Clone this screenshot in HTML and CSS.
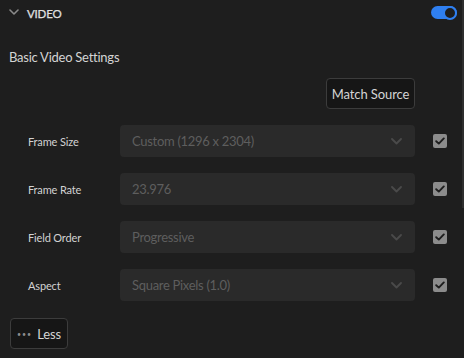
FILE: index.html
```html
<!DOCTYPE html>
<html>
<head>
<meta charset="utf-8">
<link rel="stylesheet" href="styles.css">
</head>
<body>
<div class="panel">
  <div class="header">
    <svg class="chev" width="10" height="6" viewBox="0 0 10 6"><path d="M1 1 L5 5 L9 1" fill="none" stroke="#8a8a8a" stroke-width="1.6" stroke-linecap="round" stroke-linejoin="round"/></svg>
    <span class="title">VIDEO</span>
    <span class="spacer"></span>
    <span class="toggle"><span class="knob"></span></span>
  </div>
  <div class="section-title">Basic Video Settings</div>
  <div class="match-row"><button class="btn match">Match Source</button></div>
  <div class="rows">
    <div class="row">
      <span class="label">Frame Size</span>
      <div class="select"><span>Custom (1296 x 2304)</span><svg class="dd" width="11" height="7" viewBox="0 0 11 7"><path d="M1 1 L5.5 5.5 L10 1" fill="none" stroke="#4a4a4a" stroke-width="1.8" stroke-linecap="round" stroke-linejoin="round"/></svg></div>
      <span class="check"><svg width="10" height="8" viewBox="0 0 10 8"><path d="M1.2 4.2 L3.8 6.6 L8.8 1.4" fill="none" stroke="#1e1e1e" stroke-width="1.9" stroke-linecap="round" stroke-linejoin="round"/></svg></span>
    </div>
    <div class="row">
      <span class="label">Frame Rate</span>
      <div class="select"><span>23.976</span><svg class="dd" width="11" height="7" viewBox="0 0 11 7"><path d="M1 1 L5.5 5.5 L10 1" fill="none" stroke="#4a4a4a" stroke-width="1.8" stroke-linecap="round" stroke-linejoin="round"/></svg></div>
      <span class="check"><svg width="10" height="8" viewBox="0 0 10 8"><path d="M1.2 4.2 L3.8 6.6 L8.8 1.4" fill="none" stroke="#1e1e1e" stroke-width="1.9" stroke-linecap="round" stroke-linejoin="round"/></svg></span>
    </div>
    <div class="row">
      <span class="label">Field Order</span>
      <div class="select"><span>Progressive</span><svg class="dd" width="11" height="7" viewBox="0 0 11 7"><path d="M1 1 L5.5 5.5 L10 1" fill="none" stroke="#4a4a4a" stroke-width="1.8" stroke-linecap="round" stroke-linejoin="round"/></svg></div>
      <span class="check"><svg width="10" height="8" viewBox="0 0 10 8"><path d="M1.2 4.2 L3.8 6.6 L8.8 1.4" fill="none" stroke="#1e1e1e" stroke-width="1.9" stroke-linecap="round" stroke-linejoin="round"/></svg></span>
    </div>
    <div class="row">
      <span class="label">Aspect</span>
      <div class="select"><span>Square Pixels (1.0)</span><svg class="dd" width="11" height="7" viewBox="0 0 11 7"><path d="M1 1 L5.5 5.5 L10 1" fill="none" stroke="#4a4a4a" stroke-width="1.8" stroke-linecap="round" stroke-linejoin="round"/></svg></div>
      <span class="check"><svg width="10" height="8" viewBox="0 0 10 8"><path d="M1.2 4.2 L3.8 6.6 L8.8 1.4" fill="none" stroke="#1e1e1e" stroke-width="1.9" stroke-linecap="round" stroke-linejoin="round"/></svg></span>
    </div>
  </div>
  <div class="less-row"><button class="btn less"><span class="dots">&bull;&bull;&bull;</span>Less</button></div>
  <div class="scrollthumb"></div>
</div>
</body>
</html>
```

FILE: styles.css
```css
html, body {
  margin: 0;
  padding: 0;
  background: #1e1e1e;
}
body {
  width: 464px;
  height: 358px;
  overflow: hidden;
  font-family: Lato, "Open Sans", sans-serif;
  color: #d4d4d4;
}
.panel {
  position: relative;
  height: 358px;
}
.header {
  display: flex;
  align-items: center;
  height: 26px;
  padding: 0 7px 0 9px;
}
.chev {
  margin-top: -2px;
}
.title {
  margin-left: 8px;
  font-size: 11.5px;
  font-weight: 400;
  color: #e0e0e0;
  letter-spacing: -0.2px;
  -webkit-text-stroke: 0.25px #e0e0e0;
}
.spacer { flex: 1; }
.toggle {
  position: relative;
  width: 26px;
  height: 13px;
  border-radius: 7px;
  background: #2f7ff0;
  margin-top: -1px;
}
.knob {
  position: absolute;
  right: 0;
  top: -0.5px;
  width: 10px;
  height: 10px;
  border-radius: 50%;
  border: 2px solid #2f7ff0;
  background: #1e1e1e;
}
.section-title {
  margin-top: 21px;
  padding-left: 9px;
  font-size: 13px;
  letter-spacing: -0.25px;
  line-height: 20px;
  color: #d4d4d4;
}
.match-row {
  display: flex;
  justify-content: flex-end;
  padding-right: 49px;
  margin-top: 11px;
}
.btn {
  font-family: Lato, "Open Sans", sans-serif;
  background: #161616;
  border: 1px solid #3c3c3c;
  border-radius: 4px;
  color: #d4d4d4;
  font-size: 13px;
  letter-spacing: -0.1px;
  padding: 0;
  display: flex;
  align-items: center;
  justify-content: center;
}
.match {
  width: 89px;
  height: 31px;
}
.rows {
  margin-top: 16px;
  display: flex;
  flex-direction: column;
  gap: 16px;
}
.row {
  display: flex;
  align-items: center;
  height: 32px;
}
.label {
  width: 92px;
  padding-left: 28px;
  font-size: 11px;
  letter-spacing: -0.15px;
  color: #d2d2d2;
}
.select {
  width: 295px;
  height: 32px;
  box-sizing: border-box;
  border-radius: 4px;
  background: #2a2a2a;
  display: flex;
  align-items: center;
  justify-content: space-between;
  padding: 0 13px 0 12px;
  font-size: 13px;
  letter-spacing: -0.3px;
  color: #5e5e5e;
}
.check {
  margin-left: 18px;
  width: 14px;
  height: 14px;
  border-radius: 2px;
  background: #8c8c8c;
  display: flex;
  align-items: center;
  justify-content: center;
}
.less-row {
  margin-top: 17px;
  padding-left: 10px;
  display: flex;
}
.less {
  width: 58px;
  height: 31px;
}
.dots {
  font-size: 7px;
  letter-spacing: 1px;
  color: #8c8c8c;
  margin-right: 5px;
}
.scrollthumb {
  position: absolute;
  right: 0;
  top: 0;
  width: 2px;
  height: 208px;
  background: #2e2e2e;
}
```
